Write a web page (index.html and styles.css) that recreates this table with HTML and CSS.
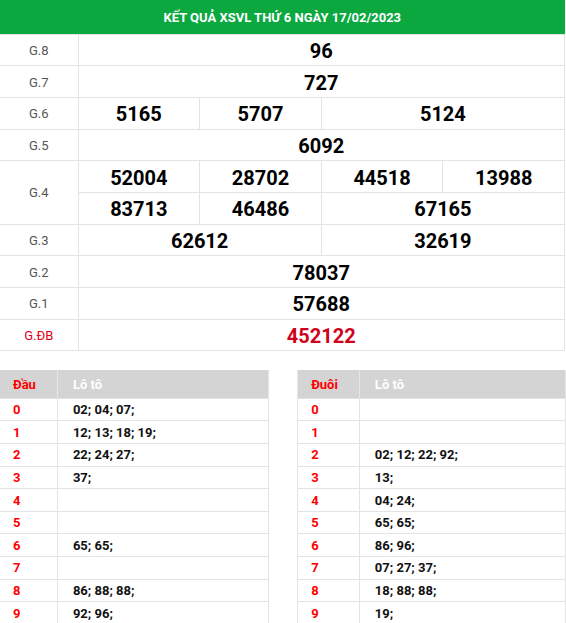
FILE: index.html
```html
<!DOCTYPE html>
<html lang="vi">
<head>
<meta charset="utf-8">
<link rel="stylesheet" href="styles.css">
</head>
<body>
<table class="kq">
  <colgroup><col class="c-label"><col><col><col><col></colgroup>
  <thead>
    <tr><th colspan="5" class="title">KẾT QUẢ XSVL THỨ 6 NGÀY 17/02/2023</th></tr>
  </thead>
  <tbody>
    <tr><td class="lbl">G.8</td><td colspan="4" class="num">96</td></tr>
    <tr><td class="lbl">G.7</td><td colspan="4" class="num">727</td></tr>
    <tr><td class="lbl">G.6</td><td class="num">5165</td><td class="num">5707</td><td colspan="2" class="num">5124</td></tr>
    <tr><td class="lbl">G.5</td><td colspan="4" class="num">6092</td></tr>
    <tr><td class="lbl" rowspan="2">G.4</td><td class="num">52004</td><td class="num">28702</td><td class="num">44518</td><td class="num">13988</td></tr>
    <tr><td class="num">83713</td><td class="num">46486</td><td colspan="2" class="num">67165</td></tr>
    <tr><td class="lbl">G.3</td><td colspan="2" class="num">62612</td><td colspan="2" class="num">32619</td></tr>
    <tr><td class="lbl">G.2</td><td colspan="4" class="num">78037</td></tr>
    <tr><td class="lbl">G.1</td><td colspan="4" class="num">57688</td></tr>
    <tr><td class="lbl red">G.ĐB</td><td colspan="4" class="num db">452122</td></tr>
  </tbody>
</table>

<div class="loto-wrap">
  <table class="loto">
    <thead><tr><th class="k">Đầu</th><th class="v">Lô tô</th></tr></thead>
    <tbody>
      <tr><td class="k">0</td><td class="v">02; 04; 07;</td></tr>
      <tr><td class="k">1</td><td class="v">12; 13; 18; 19;</td></tr>
      <tr><td class="k">2</td><td class="v">22; 24; 27;</td></tr>
      <tr><td class="k">3</td><td class="v">37;</td></tr>
      <tr><td class="k">4</td><td class="v"></td></tr>
      <tr><td class="k">5</td><td class="v"></td></tr>
      <tr><td class="k">6</td><td class="v">65; 65;</td></tr>
      <tr><td class="k">7</td><td class="v"></td></tr>
      <tr><td class="k">8</td><td class="v">86; 88; 88;</td></tr>
      <tr><td class="k">9</td><td class="v">92; 96;</td></tr>
    </tbody>
  </table>
  <table class="loto">
    <thead><tr><th class="k">Đuôi</th><th class="v">Lô tô</th></tr></thead>
    <tbody>
      <tr><td class="k">0</td><td class="v"></td></tr>
      <tr><td class="k">1</td><td class="v"></td></tr>
      <tr><td class="k">2</td><td class="v">02; 12; 22; 92;</td></tr>
      <tr><td class="k">3</td><td class="v">13;</td></tr>
      <tr><td class="k">4</td><td class="v">04; 24;</td></tr>
      <tr><td class="k">5</td><td class="v">65; 65;</td></tr>
      <tr><td class="k">6</td><td class="v">86; 96;</td></tr>
      <tr><td class="k">7</td><td class="v">07; 27; 37;</td></tr>
      <tr><td class="k">8</td><td class="v">18; 88; 88;</td></tr>
      <tr><td class="k">9</td><td class="v">19;</td></tr>
    </tbody>
  </table>
</div>
</body>
</html>
```

FILE: styles.css
```css
* { box-sizing: border-box; }
html, body { margin: 0; padding: 0; background: #fff; }
body {
  font-family: Roboto, "Noto Sans", Arial, sans-serif;
  color: #000;
  width: 566px;
}
.kq {
  width: 565px;
  border-collapse: collapse;
  table-layout: fixed;
}
.c-label { width: 78px; }
.kq th.title {
  background: #0aa83f;
  color: #fff;
  font-size: 13px;
  font-weight: 700;
  height: 34px;
  padding: 1px 0 0;
  text-align: center;
  border: 0;
}
.kq td {
  border: 1px solid #e3e3e3;
  height: 31.7px;
  padding: 0;
  text-align: center;
  vertical-align: middle;
}
.kq tbody tr td:first-child.lbl { border-left: 0; }
.kq td.lbl {
  font-size: 13px;
  color: #555;
  padding-top: 1px;
}
.kq td.lbl.red { color: #e3001b; }
.kq td.num {
  font-size: 20px;
  font-weight: 700;
  line-height: 1;
  padding-top: 2px;
}
.kq td.db { color: #d0021b; }

.loto-wrap {
  display: flex;
  justify-content: space-between;
  margin-top: 19px;
  width: 566px;
}
.loto {
  width: 47.5%;
  border-collapse: collapse;
  font-size: 13px;
  font-weight: 700;
}
.loto th {
  background: #d4d4d4;
  height: 28px;
  text-align: left;
  font-weight: 700;
  padding: 0;
  border-left: 1px solid #e6e6e6;
  border-right: 1px solid #e6e6e6;
}
.loto th.k { color: #ff0000; padding-left: 13px; padding-right: 21px; white-space: nowrap; }
.loto th.v { color: #fff; padding-left: 15px; width: 100%; }
.loto td {
  border: 1px solid #e3e3e3;
  height: 22.6px;
  padding: 0;
  text-align: left;
}
.loto td.k { color: #ff0000; padding-left: 13px; }
.loto td.v { color: #111; padding-left: 15px; }
.loto:first-child th:first-child,
.loto:first-child td:first-child { border-left: 0; }
```
